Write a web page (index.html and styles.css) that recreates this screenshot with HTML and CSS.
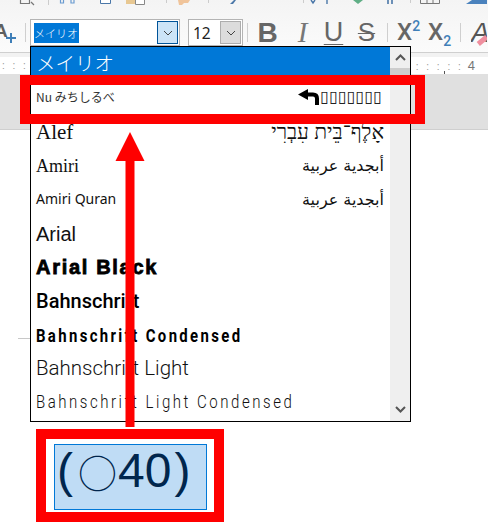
FILE: index.html
```html
<!DOCTYPE html>
<html lang="ja">

<head>
    <meta charset="UTF-8">
    <meta name="viewport" content="width=device-width, initial-scale=1.0">
    <title>Font list</title>
    <link rel="stylesheet" href="styles.css">
</head>

<body>
<div class="window">
    <div class="toolbar">
        <svg class="top-strip" width="488" height="6" viewBox="0 0 488 6">
            <path d="M20.5 0v3.5h9v-3.5M31 2l3 3" fill="none" stroke="#777" stroke-width="1.2"/>
            <path d="M48.5 0v5M166.5 0v3M208.5 0v3M303.5 0v3M410.5 0v3" stroke="#ccc"/>
            <path d="M60.5 0v3h3v-3M71 0v3h3v-3" fill="none" stroke="#6a9bd0" stroke-width="1.2"/>
            <path d="M100.5 0v3.5h10v-3.5" fill="#fff" stroke="#4a77a8"/>
            <rect x="126" y="0" width="12" height="4" fill="#e8c892"/>
            <path d="M135.5 0v4.5h9v-4.5" fill="#fff" stroke="#888"/>
            <path d="M178 0h12l-2 3h-4l-2 2h-3z" fill="#f0c49a"/>
            <path d="M236 0l-3 4h-3l4-4z" fill="#4a77a8"/>
            <path d="M315 0l-2 3 -2-3M327 0v4" fill="none" stroke="#4a77a8" stroke-width="1.4"/>
            <path d="M353 0l5 4 5-4z" fill="#5fae85"/>
            <path d="M388 0v4M392 0v4" stroke="#4a77a8" stroke-width="1.6"/>
            <path d="M420.5 0v3.5h19v-3.5M427 0v3M433 0v3" fill="none" stroke="#777"/>
            <path d="M466 4l6-4h15v4z" fill="#4a82bd"/>
        </svg>
        <div class="format-row">
            <div class="style-icon">
                <span class="style-letter">A</span>
                <svg class="style-plus" width="10" height="10" viewBox="0 0 10 10"><path d="M5 0v10M0 5h10" stroke="#3f7fb8" stroke-width="2"/></svg>
            </div>
            <span class="sep"></span>
            <div class="combo font-combo">
                <div class="combo-text"><span class="selected-text">メイリオ</span></div>
                <div class="combo-btn combo-btn-active">
                    <svg width="10" height="6" viewBox="0 0 10 6"><path d="M1 1l4 4 4-4" fill="none" stroke="#444"/></svg>
                </div>
            </div>
            <div class="combo size-combo">
                <div class="combo-text size-text">12</div>
                <div class="combo-btn">
                    <svg width="10" height="6" viewBox="0 0 10 6"><path d="M1 1l4 4 4-4" fill="none" stroke="#444"/></svg>
                </div>
            </div>
            <span class="sep sep-first"></span>
            <div class="tool tool-b">B</div>
            <div class="tool tool-i">I</div>
            <div class="tool tool-u">U</div>
            <div class="tool tool-s">S</div>
            <span class="sep sep-script"></span>
            <div class="tool tool-x">X<sup>2</sup></div>
            <div class="tool tool-x">X<sub>2</sub></div>
            <span class="sep sep-last"></span>
            <div class="tool tool-a">A</div>
        </div>
    </div>

    <div class="ruler">
        <div class="ruler-band">
            <span class="ruler-dots">: : :</span>
            <span class="ruler-right">: : : : :<span class="ruler-num">4</span></span>
        </div>
    </div>

    <div class="workspace"></div>

    <div class="page">
        <div class="crop-mark"></div>
    </div>

    <div class="font-menu">
        <ul class="font-list">
            <li class="font-row row-active"><span class="f-meiryo">メイリオ</span></li>
            <li class="font-row">
                <span class="f-nu">Nu みちしるべ</span>
                <span class="nu-sample">
                    <svg width="23" height="18" viewBox="0 0 23 18">
                        <path d="M1 6.5L11 1V12z" fill="#000"/>
                        <path d="M10 6.5h6q4 0 4 4V17" fill="none" stroke="#000" stroke-width="4"/>
                    </svg>
                    <span class="tofu">▯▯▯▯▯▯▯</span>
                </span>
            </li>
            <li class="font-row">
                <span class="f-alef">Alef</span>
                <span class="sample-hebrew" lang="he" dir="rtl">אָלֶף־בֵּית עִבְרִי</span>
            </li>
            <li class="font-row">
                <span class="f-amiri">Amiri</span>
                <span class="sample-arabic" lang="ar" dir="rtl">أبجدية عربية</span>
            </li>
            <li class="font-row">
                <span class="f-quran">Amiri Quran</span>
                <span class="sample-arabic" lang="ar" dir="rtl">أبجدية عربية</span>
            </li>
            <li class="font-row"><span class="f-arial">Arial</span></li>
            <li class="font-row"><span class="f-black">Arial Black</span></li>
            <li class="font-row"><span class="f-bahn">Bahnschrift</span></li>
            <li class="font-row"><span class="f-bahn-cond">Bahnschrift Condensed</span></li>
            <li class="font-row"><span class="f-bahn-light">Bahnschrift Light</span></li>
            <li class="font-row"><span class="f-bahn-light-cond">Bahnschrift Light Condensed</span></li>
        </ul>
        <div class="scrollbar">
            <svg class="scroll-arrow" width="11" height="7" viewBox="0 0 11 7"><path d="M1 6l4.5-4.5L10 6" fill="none" stroke="#555" stroke-width="2"/></svg>
            <div class="scroll-thumb"></div>
            <svg class="scroll-arrow scroll-down" width="11" height="7" viewBox="0 0 11 7"><path d="M1 1l4.5 4.5L10 1" fill="none" stroke="#555" stroke-width="2"/></svg>
        </div>
    </div>

    <!-- red annotations on top of the screenshot -->
    <div class="red-box"></div>
    <svg class="red-arrow" width="30" height="296" viewBox="0 0 30 296">
        <path d="M15 0L29.5 29H19.5V295H10.5V29H0.5z" fill="#f00"/>
    </svg>
    <div class="callout">
        <div class="callout-text">
            <span>(</span>
            <span class="callout-circle">○</span>
            <span>40</span>
            <span class="callout-close">)</span>
        </div>
    </div>
</div>
</body>

</html>
```

FILE: styles.css
```css
* {
    padding: 0;
    margin: 0;
    box-sizing: border-box;
}

body {
    font-family: "Noto Sans", "Noto Sans CJK JP", sans-serif;
    background: #fff;
}

.window {
    position: relative;
    width: 488px;
    height: 531px;
    overflow: hidden;
    display: flex;
    flex-direction: column;
}

/* toolbar */

.toolbar {
    height: 53px;
    flex: none;
    background: linear-gradient(#f4f4f4, #fbfbfb);
    border-bottom: 1px solid #cfcfcf;
}

.top-strip {
    display: block;
}

.format-row {
    display: flex;
    align-items: center;
    height: 27px;
    margin-top: 13px;
    white-space: nowrap;
}

.style-icon {
    position: relative;
    width: 25px;
    height: 27px;
    flex: none;
    overflow: hidden;
}

.style-letter {
    position: absolute;
    left: -6px;
    top: 1px;
    font: bold 19px "Liberation Sans", sans-serif;
    color: #5f5f5f;
}

.style-plus {
    position: absolute;
    left: 6px;
    top: 14px;
}

.sep {
    width: 1px;
    height: 19px;
    flex: none;
    background: #cfcfcf;
}

.combo {
    display: flex;
    align-items: center;
    justify-content: space-between;
    height: 27px;
    flex: none;
    padding: 1px;
    background: #fff;
    border: 1px solid #b4b4b4;
}

.font-combo {
    width: 150px;
    margin-left: 4px;
}

.size-combo {
    width: 55px;
    margin-left: 8px;
}

.combo-text {
    padding-left: 2px;
    font-size: 12px;
}

.selected-text {
    display: inline-block;
    height: 20px;
    line-height: 20px;
    padding-right: 1px;
    background: #0078d7;
    color: #fff;
    font-family: "Noto Sans CJK JP", sans-serif;
    font-size: 11px;
    font-weight: 300;
}

.size-text {
    padding-left: 3px;
    font-size: 15.5px;
    font-family: "Noto Sans", sans-serif;
    color: #222;
}

.combo-btn {
    display: flex;
    align-items: center;
    justify-content: center;
    width: 21px;
    height: 23px;
    background: #dcdcdc;
    border: 1px solid #adadad;
}

.combo-btn-active {
    background: #cce4f7;
    border: 1px solid #005499;
}

.sep-first {
    margin-left: 4px;
    margin-right: 3px;
}

.tool {
    width: 33px;
    flex: none;
    text-align: center;
    color: #666;
    font-family: "Liberation Sans", sans-serif;
    line-height: 27px;
}

.tool-b {
    font-size: 28px;
    font-weight: bold;
}

.tool-i {
    font-family: "Liberation Serif", serif;
    font-style: italic;
    font-size: 29px;
    padding-left: 4px;
    color: #777;
}

.tool-u {
    font-size: 27px;
    text-decoration: underline;
    text-decoration-thickness: 1px;
    text-underline-offset: 3px;
}

.tool-s {
    font-size: 26px;
    text-decoration: line-through;
    text-decoration-thickness: 1px;
}

.sep-script {
    margin-left: 4px;
    margin-right: 5px;
}

.tool-x {
    width: 31px;
    font-family: "Roboto", sans-serif;
    font-size: 24px;
    font-weight: 500;
    text-align: left;
    padding-left: 4px;
}

.tool-x sup,
.tool-x sub {
    font-size: 14px;
    color: #3f7fb8;
    line-height: 0;
}

.sep-last {
    margin-left: 5px;
    margin-right: 10px;
}

.tool-a {
    position: relative;
    width: 16px;
    font-size: 28px;
    font-style: italic;
    text-align: left;
    color: #555;
    overflow: hidden;
}

.tool-a::after {
    content: "";
    position: absolute;
    right: -1px;
    bottom: 3px;
    width: 11px;
    height: 5px;
    background: #ef8f9f;
    transform: rotate(-40deg);
}

/* ruler and page */

.ruler {
    height: 21px;
    flex: none;
    padding-top: 4px;
    background: #f2f2f2;
}

.ruler-band {
    display: flex;
    justify-content: space-between;
    height: 17px;
    padding: 0 13px 0 2px;
    background: linear-gradient(#555, #555) no-repeat 444px 14px / 1px 3px, #fff;
    color: #999;
    font: 10px/17px "Liberation Sans", sans-serif;
}

.ruler-dots {
    word-spacing: 5px;
}

.ruler-right {
    word-spacing: 5px;
}

.ruler-num {
    margin-left: 7px;
    color: #777;
    font-size: 13px;
}

.workspace {
    height: 56px;
    flex: none;
    background: #e0e0e0;
    border-bottom: 1px solid #cfcfcf;
}

.page {
    flex: 1;
    background: #fff;
}

.crop-mark {
    width: 12px;
    height: 1px;
    margin: 208px 0 0 18px;
    background: #c8c8c8;
}

/* font dropdown */

.font-menu {
    position: absolute;
    left: 30px;
    top: 46px;
    width: 381px;
    height: 376px;
    display: flex;
    background: #fff;
    border: 1px solid #000;
}

.font-list {
    flex: 1;
    min-width: 0;
    list-style: none;
}

.font-row {
    display: flex;
    align-items: center;
    justify-content: space-between;
    height: 34px;
    padding: 0 6px 0 5px;
    color: #111;
    white-space: nowrap;
    overflow: hidden;
}

.row-active {
    background: #0078d7;
    color: #fff;
}

.f-meiryo {
    margin-bottom: 4px;
    font-family: "Noto Sans CJK JP", sans-serif;
    font-size: 19.5px;
    font-weight: 300;
}

.f-nu {
    margin-bottom: 3px;
    font-family: "Noto Sans CJK JP", sans-serif;
    font-size: 12px;
    color: #333;
}

.nu-sample {
    display: flex;
    align-items: center;
    margin-right: 2px;
    margin-bottom: 3px;
}

.tofu {
    font-family: "DejaVu Sans", sans-serif;
    font-size: 16px;
    color: #222;
}

.f-alef {
    font-family: "Liberation Serif", serif;
    font-size: 21px;
}

.sample-hebrew {
    font-family: "Liberation Serif", serif;
    font-size: 21px;
}

.sample-arabic {
    margin-bottom: 2px;
    font-family: "DejaVu Sans", sans-serif;
    font-size: 16px;
}

.f-amiri {
    font-family: "Liberation Serif", serif;
    font-size: 18px;
}

.f-quran {
    margin-bottom: 4px;
    font-family: "Noto Sans", sans-serif;
    font-size: 14px;
}

.f-arial {
    font-family: "Liberation Sans", sans-serif;
    font-size: 20px;
}

.f-black {
    margin-bottom: 2px;
    font-family: "Liberation Sans", sans-serif;
    font-size: 20px;
    font-weight: bold;
    letter-spacing: 1.7px;
    color: #000;
    -webkit-text-stroke: .8px #000;
}

.f-bahn {
    margin-bottom: 3px;
    font-family: "Roboto", sans-serif;
    font-size: 20px;
    font-weight: 500;
    color: #000;
}

/* no condensed face installed, squeeze the normal one */
.f-bahn-cond {
    margin-bottom: 2px;
    font-family: "Roboto", sans-serif;
    font-size: 19px;
    font-weight: 700;
    letter-spacing: 3px;
    color: #000;
    transform: scaleX(.785);
    transform-origin: left center;
}

.f-bahn-light {
    margin-bottom: 5px;
    font-family: "Roboto", sans-serif;
    font-size: 20.5px;
    font-weight: 300;
}

.f-bahn-light-cond {
    margin-bottom: 5px;
    font-family: "Roboto", sans-serif;
    font-size: 19px;
    font-weight: 300;
    letter-spacing: 3.2px;
    transform: scaleX(.79);
    transform-origin: left center;
}

.scrollbar {
    display: flex;
    flex-direction: column;
    align-items: center;
    width: 20px;
    flex: none;
    padding-top: 7px;
    background: #efefef;
}

.scroll-arrow {
    flex: none;
}

.scroll-thumb {
    width: 100%;
    height: 15px;
    margin-top: 7px;
    background: #cdcdcd;
}

.scroll-down {
    margin-top: auto;
    margin-bottom: 8px;
}

/* annotations */

.red-box {
    position: absolute;
    left: 20px;
    top: 75px;
    width: 405px;
    height: 49px;
    border: 10px solid #f00;
}

.red-arrow {
    position: absolute;
    left: 115px;
    top: 132px;
}

.callout {
    position: absolute;
    left: 36px;
    top: 429px;
    width: 188px;
    height: 93px;
    padding: 5px 7px 2px 8px;
    background: #fff;
    border: 10px solid #f00;
}

.callout-text {
    display: flex;
    align-items: center;
    height: 100%;
    padding: 0 0 12px 2px;
    background: #bfdcf5;
    border: 1px solid #0078d7;
    color: #00264d;
    font-family: "Liberation Sans", sans-serif;
    font-size: 48px;
    line-height: 1;
}

.callout-circle {
    margin: 0 1px 0 5px;
    font-family: "Noto Sans CJK JP", sans-serif;
    font-size: 39px;
    font-weight: 300;
}

.callout-close {
    margin-left: 3px;
}
```
